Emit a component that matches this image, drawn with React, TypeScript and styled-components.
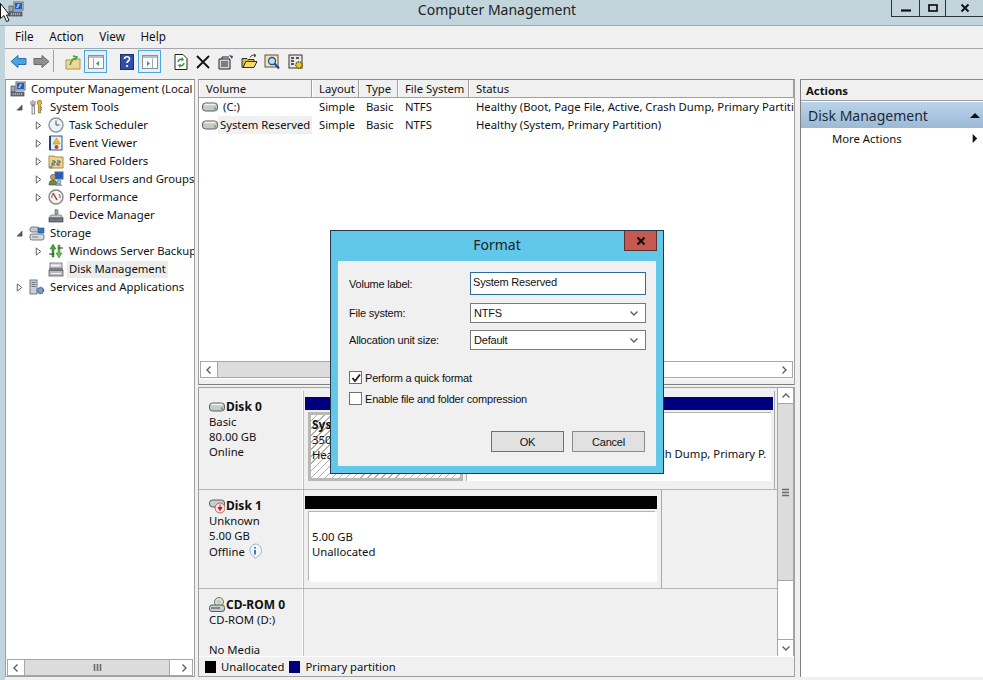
import React from "react";
import styled, { createGlobalStyle } from "styled-components";

const Global = createGlobalStyle`
html, body { margin: 0; padding: 0; background: #c3d5dc; overflow: hidden; }
* { box-sizing: border-box; }
`;

const UI = `"Noto Sans", "Liberation Sans", sans-serif`;
const DLG = `"Liberation Sans", Arial, sans-serif`;

const Win = styled.div`
  position: relative;
  width: 983px;
  height: 680px;
  background: #c3d5dc;
  font-family: ${UI};
  font-size: 11.3px;
  color: #111;
  overflow: hidden;
  display: flex;
  flex-direction: column;
`;
const TitleBar = styled.div`
  position: relative;
  height: 26px;
  flex: none;
  display: flex;
  align-items: center;
  justify-content: center;
  font-size: 14px;
  color: #222;
  padding-left: 11px;
  padding-bottom: 6px;
  border-bottom: 1px solid #9fa9ad;
`;
const AppIconSlot = styled.div`
  position: absolute;
  left: 8px;
  top: 1px;
`;
const Cursor = styled.svg`
  position: absolute;
  left: 0;
  top: 3px;
  width: 10px;
  height: 19px;
`;
const Controls = styled.div`
  position: absolute;
  right: 0;
  top: 0;
  display: flex;
  height: 17px;
  border-bottom: 1px solid #2c3438;
  border-left: 1px solid #2c3438;
`;
const Ctl = styled.div<{ $w: number }>`
  width: ${(p) => p.$w}px;
  display: flex;
  align-items: center;
  justify-content: center;
  & + & { border-left: 1px solid #2c3438; }
`;
const MenuBar = styled.div`
  height: 23px;
  flex: none;
  margin-left: 5px;
  padding: 0 0 2px 10px;
  background: #f0f0f0;
  border-bottom: 1px solid #a8a8a8;
  display: flex;
  align-items: center;
  gap: 15.500px;
  font-size: 11.700px;
`;
const ToolBar = styled.div`
  height: 30px;
  flex: none;
  margin-left: 5px;
  background: #f0f0f0;
  display: flex;
  align-items: flex-start;
  padding: 1px 0 0 5px;
`;
const Tool = styled.div<{ $w?: number; $ml?: number; $on?: boolean }>`
  width: ${(p) => p.$w ?? 16}px;
  height: 23px;
  margin-left: ${(p) => p.$ml ?? 0}px;
  flex: none;
  display: flex;
  align-items: center;
  justify-content: center;
  ${(p) => p.$on && `border: 1px solid #4fa6de; background: #e4f0f9;`}
`;
const ToolSep = styled.div`
  width: 1px;
  height: 22px;
  margin-left: 3px;
  background: #a0a0a0;
  flex: none;
`;
const Body = styled.div`
  flex: 1;
  display: flex;
  margin-left: 5px;
  background: #f0f0f0;
  padding-bottom: 3px;
  min-height: 0;
`;
const TreePane = styled.div`
  width: 190px;
  flex: none;
  display: flex;
  flex-direction: column;
  border: 1px solid #a0a0a0;
  border-top-color: #8a8a8a;
  background: #fff;
`;
const TreeList = styled.div`
  flex: 1;
  overflow: hidden;
`;
const TreeRow = styled.div<{ $pad: number }>`
  height: 18px;
  display: flex;
  align-items: center;
  padding-left: ${(p) => p.$pad}px;
  white-space: nowrap;
`;
const Twist = styled.div`
  width: 12px;
  flex: none;
  margin-right: 4px;
  display: flex;
  justify-content: center;
`;
const TreeLabel = styled.span<{ $sel?: boolean }>`
  margin-left: 3px;
  padding: 0 2px 1px;
  line-height: 16px;
  ${(p) => p.$sel && `background: #ececec;`}
`;
const HBar = styled.div`
  height: 17px;
  flex: none;
  display: flex;
  margin: 0 1px;
  border: 1px solid #a6a6a6;
  background: #fff;
`;
const SBtn = styled.div`
  width: 16px;
  height: 100%;
  flex: none;
  display: flex;
  align-items: center;
  justify-content: center;
  background: #fff;
`;
const HThumb = styled.div`
  flex: 1;
  background: #dcdcdc;
  border-left: 1px solid #a6a6a6;
  border-right: 1px solid #a6a6a6;
  display: flex;
  align-items: center;
  justify-content: center;
  margin-right: 6px;
`;
const Center = styled.div`
  flex: 1;
  margin-left: 3px;
  min-width: 0;
  display: flex;
  flex-direction: column;
`;
const ListPane = styled.div`
  height: 306px;
  flex: none;
  display: flex;
  flex-direction: column;
  border: 1px solid #a0a0a0;
  border-top-color: #8a8a8a;
  border-bottom: 1px solid #808080;
  background: #fff;
`;
const ColGrid = styled.div`
  display: grid;
  grid-template-columns: 113px 47px 39px 71px 1fr;
  white-space: nowrap;
  overflow: hidden;
`;
const Header = styled(ColGrid)`
  height: 18px;
  flex: none;
  background: #f0f0f0;
  border-bottom: 1px solid #a0a0a0;
`;
const HCell = styled.div`
  padding: 0 0 0 6px;
  line-height: 17px;
  border-right: 1px solid #a0a0a0;
  border-left: 1px solid #fff;
`;
const ListRow = styled(ColGrid)`
  height: 18px;
  align-items: center;
`;
const Cell = styled.div`
  padding-left: 7px;
  line-height: 18px;
`;
const VolCell = styled.div`
  display: flex;
  align-items: center;
  padding-left: 3px;
  height: 18px;
`;
const VolName = styled.span<{ $sel?: boolean; $ml: number }>`
  margin-left: ${(p) => p.$ml}px;
  flex: 1;
  padding-left: ${(p) => (p.$sel ? 2 : 0)}px;
  line-height: 18px;
  ${(p) => p.$sel && `background: #f0f0f0;`}
`;
const ListBody = styled.div`
  flex: 1;
  overflow: hidden;
`;
const HFill = styled.div`
  flex: 1;
  background: #fff;
`;
const LeftThumb = styled.div`
  width: 130px;
  background: #dcdcdc;
  border-left: 1px solid #a6a6a6;
`;
const ScrollStrip = styled.div`
  height: 6px;
  flex: none;
  background: #f0f0f0;
  border-top: 1px solid #fff;
`;
const LowerPane = styled.div`
  flex: 1;
  margin-top: 2px;
  min-height: 0;
  display: flex;
  flex-direction: column;
  border: 1px solid #a0a0a0;
`;
const DiskArea = styled.div`
  flex: 1;
  min-height: 0;
  display: flex;
`;
const Disks = styled.div`
  flex: 1;
  min-width: 0;
  display: flex;
  flex-direction: column;
  overflow: hidden;
  padding-top: 3px;
`;
const DiskRow = styled.div<{ $h?: number }>`
  height: ${(p) => (p.$h ? `${p.$h}px` : "auto")};
  flex: ${(p) => (p.$h ? "none" : 1)};
  display: flex;
  border-bottom: 1px solid #b4b4b4;
  &:last-child { border-bottom: none; }
`;
const DiskInfo = styled.div`
  width: 104px;
  flex: none;
  padding: 8px 0 0 10px;
  line-height: 15px;
  border-right: 1px solid #fff;
  box-shadow: 1px 0 0 #bdbdbd;
`;
const DiskName = styled.div`
  display: flex;
  align-items: center;
  font-weight: 700;
  font-size: 12px;
  height: 15px;
  gap: 1px;
`;
const Offline = styled.div`
  display: flex;
  align-items: center;
  gap: 2px;
`;
const DiskMap = styled.div<{ $w: number; $pr: number }>`
  width: ${(p) => p.$w}px;
  flex: none;
  margin-left: 1px;
  padding: 6px ${(p) => p.$pr}px 4px 1px;
  border-right: 1px solid #a8a8a8;
  display: flex;
  flex-direction: column;
`;
const PartBar = styled.div<{ $c: string }>`
  height: 13px;
  flex: none;
  background: ${(p) => p.$c};
`;
const Parts = styled.div`
  flex: 1;
  margin-top: 2px;
  display: flex;
  gap: 3px;
  padding-left: 3px;
  min-height: 0;
`;
const Part = styled.div<{ $w: string; $hatch?: boolean }>`
  width: ${(p) => p.$w};
  height: 69px;
  flex: none;
  overflow: hidden;
  white-space: nowrap;
  padding: 2px 0 0 1px;
  line-height: 15px;
  border: ${(p) => (p.$hatch ? "3px solid #b8b8b8" : "1px solid #b4b4b4")};
  ${(p) => !p.$hatch && `border-width: 1px 0 0 1px; padding-top: 33px; padding-left: 5px;`}
  background: ${(p) =>
    p.$hatch
      ? "repeating-linear-gradient(-45deg, #b0b0b0 0 1px, #fff 1px 5px)"
      : "#fff"};
`;
const Unalloc = styled(Part)`
  padding-top: 17px !important;
  padding-left: 3px !important;
  box-shadow: 2px 2px 0 #fff;
`;
const PartTitle = styled.div`
  font-weight: 700;
  font-size: 12px;
`;
const VBar = styled.div`
  width: 17px;
  flex: none;
  display: flex;
  flex-direction: column;
  border-left: 1px solid #a6a6a6;
  border-right: 1px solid #a6a6a6;
  background: #fff;
`;
const VBtn = styled.div`
  height: 15px;
  flex: none;
  display: flex;
  align-items: center;
  justify-content: center;
`;
const VThumb = styled.div`
  height: 178px;
  flex: none;
  background: #dcdcdc;
  border-top: 1px solid #a6a6a6;
  border-bottom: 1px solid #a6a6a6;
  display: flex;
  align-items: center;
  justify-content: center;
`;
const VFill = styled.div`
  flex: 1;
`;
const VBtnLow = styled(VBtn)`
  height: 17px;
  border-top: 1px solid #a6a6a6;
`;
const Legend = styled.div`
  height: 20px;
  flex: none;
  display: flex;
  align-items: center;
  padding-left: 6px;
  border-top: 1px solid #fff;
`;
const Swatch = styled.div<{ $c: string }>`
  width: 11px;
  height: 12px;
  background: ${(p) => p.$c};
  margin-right: 5px;
`;
const LegendText = styled.span`
  margin-right: 5px;
`;
const ActionsPane = styled.div`
  width: 183px;
  flex: none;
  margin-left: 5px;
  border-left: 1px solid #808080;
  border-top: 1px solid #8a8a8a;
  background: #fff;
`;
const ActionsHead = styled.div`
  height: 21px;
  background: #f0f0f0;
  font-weight: 700;
  padding-left: 5px;
  line-height: 21px;
  border-bottom: 1px solid #a0a0a0;
`;
const ActionsTitle = styled.div`
  height: 26px;
  display: flex;
  align-items: center;
  justify-content: space-between;
  font-size: 14px;
  padding: 0 3px 0 7px;
  margin-top: 1px;
  color: #1b2a3a;
  background: linear-gradient(#bad3ea, #9cb9d4);
`;
const ActionItem = styled.div`
  height: 20px;
  display: flex;
  align-items: center;
  justify-content: space-between;
  padding: 0 4px 0 31px;
`;
const Dialog = styled.div`
  position: absolute;
  left: 330px;
  top: 230px;
  width: 334px;
  height: 244px;
  background: #62c8ea;
  border: 1px solid #23384a;
  padding: 30px 7px 7px;
  font-family: ${DLG};
  font-size: 11px;
  letter-spacing: -0.2px;
  color: #111;
`;
const DialogTitle = styled.div`
  position: absolute;
  left: 0;
  right: 0;
  top: 5px;
  text-align: center;
  font-family: ${UI};
  letter-spacing: 0;
  font-size: 14px;
  line-height: 18px;
  color: #222;
`;
const DialogClose = styled.div`
  position: absolute;
  right: 6px;
  top: 0;
  width: 33px;
  height: 20px;
  background: #c75a50;
  border: 1px solid #5a3330;
  border-top: none;
  display: flex;
  align-items: center;
  justify-content: center;
`;
const DialogBody = styled.div`
  height: 100%;
  background: #f0f0f0;
  padding: 11px 11px 0;
  display: flex;
  flex-direction: column;
`;
const FieldRow = styled.div<{ $mt: number; $h: number }>`
  display: grid;
  grid-template-columns: 121px 176px;
  align-items: center;
  height: ${(p) => p.$h}px;
  margin-top: ${(p) => p.$mt}px;
`;
const TextBox = styled.div`
  height: 100%;
  background: #fff;
  border: 1px solid #2f6b95;
  padding: 2px 2px;
  line-height: 14px;
`;
const Select = styled.div`
  height: 100%;
  background: #fff;
  border: 1px solid #7a7a7a;
  display: flex;
  align-items: center;
  justify-content: space-between;
  padding: 0 6px 0 3px;
`;
const CheckRow = styled.div<{ $mt: number }>`
  display: flex;
  align-items: center;
  margin-top: ${(p) => p.$mt}px;
  height: 13px;
`;
const CheckBox = styled.div`
  width: 13px;
  height: 13px;
  background: #fff;
  border: 1px solid #707070;
  margin-right: 3px;
  display: flex;
  align-items: center;
  justify-content: center;
`;
const Buttons = styled.div`
  display: flex;
  justify-content: flex-end;
  gap: 8px;
  margin-top: 26px;
`;
const Btn = styled.div<{ $def?: boolean }>`
  width: 73px;
  height: 21px;
  background: #e1e1e1;
  border: 1px solid ${(p) => (p.$def ? "#3c7fb1" : "#8a8a8a")};
  display: flex;
  align-items: center;
  justify-content: center;
`;

const Ic = styled.svg<{ $s?: number }>`
  width: ${(p) => p.$s ?? 16}px;
  height: ${(p) => p.$s ?? 16}px;
  flex: none;
  display: block;
`;

const Computer = () => (
  <Ic viewBox="0 0 16 16">
    <rect x="6" y="1" width="9" height="8" fill="#d5dde6" stroke="#5a6a80" />
    <rect x="7" y="2" width="7" height="6" fill="#1f5fc4" />
    <path d="M8 7l2-4h2l-2 4z" fill="#fff" opacity=".6" />
    <rect x="1" y="5" width="4" height="6" fill="#9aa7b5" stroke="#4a5563" strokeWidth=".7" />
    <rect x="1" y="11" width="13" height="4" fill="#6d7680" stroke="#3d444c" strokeWidth=".7" />
    <path d="M3 13h9" stroke="#d8dde2" strokeDasharray="1 1" />
  </Ic>
);
const Tools = () => (
  <Ic viewBox="0 0 16 16">
    <path d="M4 1v5M2 2v3l2 2 2-2V2" fill="none" stroke="#8a8f96" strokeWidth="1.300" />
    <rect x="3" y="7" width="2.400" height="8" fill="#e8e8e8" stroke="#60666e" strokeWidth=".7" />
    <path d="M11 1l1.500 1v3l-1 1v2h1v1h-1v1h1v1h-1v3h-2V6l-1-1V2z" fill="#eab531" stroke="#7a5a10" strokeWidth=".6" />
  </Ic>
);
const Clock = () => (
  <Ic viewBox="0 0 16 16">
    <circle cx="8" cy="8" r="7" fill="#eef1f3" stroke="#8c969e" strokeWidth="1.400" />
    <path d="M8 3.500V8h3.500" fill="none" stroke="#4a5560" strokeWidth="1" />
  </Ic>
);
const EventLog = () => (
  <Ic viewBox="0 0 16 16">
    <rect x="2" y="1" width="12" height="14" fill="#e8eef6" stroke="#33558a" />
    <path d="M2 1v14" stroke="#27417a" strokeWidth="2" />
    <path d="M8.500 3L12 9H5z" fill="#f2c21e" stroke="#9a7610" strokeWidth=".5" />
    <circle cx="8.500" cy="12" r="2" fill="#c93a3a" />
  </Ic>
);
const SharedFolder = () => (
  <Ic viewBox="0 0 16 16">
    <path d="M1 3h5l1 1h8v11H1z" fill="#eed58e" stroke="#a68a42" />
    <path d="M4 8h3v2H4v2h3M9 8h3v2H9v2h3" fill="none" stroke="#3c5a7a" />
    <circle cx="3" cy="14" r="1.600" fill="#5aa868" />
  </Ic>
);
const Users = () => (
  <Ic viewBox="0 0 16 16">
    <rect x="7" y="1" width="8" height="7" fill="#1f5fc4" stroke="#5a6a80" />
    <circle cx="5" cy="6" r="2.600" fill="#c89a6a" stroke="#5d4a30" strokeWidth=".6" />
    <path d="M1 14c0-4 2-5 4-5s4 1 4 5z" fill="#6d8a3c" stroke="#44552a" strokeWidth=".6" />
    <circle cx="11" cy="11" r="2" fill="#b0c4d8" stroke="#5a6a80" strokeWidth=".6" />
    <path d="M8 15c0-2 1-2.500 3-2.500s3 .5 3 2.500z" fill="#8aa6c2" />
  </Ic>
);
const Gauge = () => (
  <Ic viewBox="0 0 16 16">
    <circle cx="8" cy="8" r="7" fill="#f4f4f2" stroke="#868686" strokeWidth="1.400" />
    <path d="M5 4l4 7" stroke="#c5322a" strokeWidth="1.500" />
    <path d="M4 9a4 4 0 0 1 1-4M11 5a4 4 0 0 1 1 4" fill="none" stroke="#333" strokeWidth=".8" />
  </Ic>
);
const DeviceMgr = () => (
  <Ic viewBox="0 0 16 16">
    <path d="M8 2v6" stroke="#666" strokeWidth="1" />
    <rect x="7" y="3" width="3" height="4" fill="#8cb88c" stroke="#4e6e4e" strokeWidth=".6" />
    <path d="M3 8h10l2 3H1z" fill="#c9ced3" stroke="#5f666d" strokeWidth=".7" />
    <rect x="1" y="11" width="14" height="4" fill="#73797f" stroke="#40454a" strokeWidth=".7" />
  </Ic>
);
const Storage = () => (
  <Ic viewBox="0 0 16 16">
    <rect x="1" y="2" width="9" height="5" rx="2" fill="#c4ccd2" stroke="#59626a" strokeWidth=".8" />
    <rect x="1" y="9" width="14" height="6" rx="2" fill="#d2d8dc" stroke="#59626a" strokeWidth=".8" />
    <rect x="9" y="3" width="6" height="5" fill="#2f78c4" stroke="#2b4e78" strokeWidth=".6" />
    <path d="M3 12h6" stroke="#7a848c" />
  </Ic>
);
const Backup = () => (
  <Ic viewBox="0 0 16 16">
    <path d="M5 1l3 5H6v8H4V6H2z" fill="#4aa63a" stroke="#2a6a20" strokeWidth=".5" />
    <path d="M11 15l-3-5h2V2h2v8h2z" fill="#6cc24a" stroke="#2a6a20" strokeWidth=".5" />
    <path d="M1 11h5M10 5h5" stroke="#333" />
  </Ic>
);
const DiskMgmt = () => (
  <Ic viewBox="0 0 16 16">
    <rect x="2" y="2" width="12" height="5" fill="#d8dbde" stroke="#6a6a6a" strokeWidth=".8" />
    <rect x="1" y="7" width="14" height="2.500" fill="#7c8186" />
    <rect x="1" y="9.500" width="14" height="5.500" fill="#b6bbc0" stroke="#5a5a5a" strokeWidth=".8" />
    <path d="M3 4.500h8M3 12.500h10" stroke="#f4f4f4" />
  </Ic>
);
const Services = () => (
  <Ic viewBox="0 0 16 16">
    <rect x="1" y="1" width="7" height="14" fill="#c8ced4" stroke="#5c646c" strokeWidth=".8" />
    <path d="M2.500 3.500h4M2.500 5.500h4M2.500 7.500h4" stroke="#6a727a" />
    <circle cx="11.500" cy="11.500" r="3" fill="#7aa3cc" stroke="#46688c" strokeDasharray="1.500 .6" strokeWidth="1.500" />
  </Ic>
);
const Drive = () => (
  <Ic viewBox="0 0 16 12" $s={16}>
    <rect x=".5" y="2" width="15" height="8" rx="3" fill="#c4c9c9" stroke="#5a5f5f" />
    <path d="M2.500 3.500h11" stroke="#f2f2f2" strokeWidth="1.500" />
    <rect x="12" y="6.500" width="2" height="2" fill="#5fae4c" />
  </Ic>
);
const DriveDown = () => (
  <Ic viewBox="0 0 16 16">
    <rect x=".5" y="2" width="15" height="7" rx="3" fill="#c9cdcd" stroke="#5a5f5f" />
    <circle cx="11" cy="10" r="5" fill="#f6e4e4" stroke="#a03030" strokeWidth=".7" />
    <path d="M11 6.500v4M9 9.500l2 3 2-3z" stroke="#c02020" fill="#c02020" />
  </Ic>
);
const CdDrive = () => (
  <Ic viewBox="0 0 16 16">
    <circle cx="10" cy="5" r="4.500" fill="#d9e2cf" stroke="#6b7a6b" />
    <circle cx="10" cy="5" r="1.200" fill="#fff" stroke="#6b7a6b" strokeWidth=".5" />
    <rect x=".5" y="8" width="15" height="6.500" rx="2.500" fill="#c9cdcd" stroke="#5a5f5f" />
    <path d="M2 11h9" stroke="#444" />
  </Ic>
);
const Info = () => (
  <Ic viewBox="0 0 16 16">
    <path d="M8 1a6.500 6.500 0 0 1 2.500 12.500L8 15.500l-1-2.200A6.500 6.500 0 0 1 8 1z" fill="#f2f6fb" stroke="#9db6d2" />
    <path d="M8 4v1.600M8 7v4.500" stroke="#2f6bb0" strokeWidth="1.800" />
  </Ic>
);
const TwistOpen = () => (
  <Ic viewBox="0 0 8 8" $s={7}>
    <path d="M7 1v6H1z" fill="#595959" stroke="#404040" strokeWidth=".5" />
  </Ic>
);
const TwistClosed = () => (
  <Ic viewBox="0 0 8 10" $s={9}>
    <path d="M1.500 1l5 4-5 4z" fill="#fff" stroke="#555" />
  </Ic>
);
const Chev = ({ d }: { d: string }) => (
  <Ic viewBox="0 0 10 10" $s={10}>
    <path d={d} fill="none" stroke="#606060" strokeWidth="1.400" />
  </Ic>
);
const Grip = ({ vertical }: { vertical?: boolean }) => (
  <Ic viewBox="0 0 9 9" $s={9}>
    {vertical ? (
      <path d="M1 1.500h7M1 4.500h7M1 7.500h7" stroke="#6a6a6a" strokeWidth="1.600" />
    ) : (
      <path d="M1.500 1v7M4.500 1v7M7.500 1v7" stroke="#6a6a6a" strokeWidth="1.600" />
    )}
  </Ic>
);

const ArrowBtn = ({ fill, stroke, flip }: { fill: string; stroke: string; flip?: boolean }) => (
  <Ic viewBox="0 0 17 14" $s={17}>
    <path
      d={flip ? "M16 7L9 1v3H1v6h8v3z" : "M1 7l7-6v3h8v6H8v3z"}
      fill={fill}
      stroke={stroke}
    />
  </Ic>
);
const UpFolder = () => (
  <Ic viewBox="0 0 16 16">
    <path d="M1 6h5l1-1h8v10H1z" fill="#f0d79a" stroke="#b09250" />
    <path d="M5 11c1-4 3-6 6-7M8 2l4 1-2 3" fill="none" stroke="#42a83c" strokeWidth="1.600" />
  </Ic>
);
const PaneIcon = ({ right }: { right?: boolean }) => (
  <Ic viewBox="0 0 16 14" $s={16}>
    <rect x=".5" y=".5" width="15" height="13" fill="#f8fafb" stroke="#8e8e8e" />
    <rect x="1" y="1" width="14" height="2" fill="#b8bec2" />
    <path d={right ? "M10.500 3.500v10" : "M5.500 3.500v10"} stroke="#a8a8a8" />
    <path d={right ? "M5 6v5l3-2.500z" : "M11 6v5l-3-2.500z"} fill="#3da04c" />
  </Ic>
);
const Help = () => (
  <Ic viewBox="0 0 14 16">
    <rect x=".5" y=".5" width="13" height="15" fill="#2f4fa8" stroke="#1c2f70" />
    <path d="M4.500 5c0-3 5-3 5 0 0 2-2.500 2-2.500 4M7 11v2" fill="none" stroke="#fff" strokeWidth="1.700" />
  </Ic>
);
const Refresh = () => (
  <Ic viewBox="0 0 14 16">
    <path d="M1 .5h8l4 4v11H1z" fill="#fff" stroke="#222" />
    <path d="M4 8a3 3 0 0 1 5-2M10 9a3 3 0 0 1-5 2" fill="none" stroke="#2f9a33" strokeWidth="1.500" />
    <path d="M8 3l2 3-3 1zM6 14l-2-3 3-1z" fill="#2f9a33" />
  </Ic>
);
const Del = () => (
  <Ic viewBox="0 0 14 14" $s={14}>
    <path d="M1 1l12 12M13 1L1 13" stroke="#111" strokeWidth="1.800" />
  </Ic>
);
const Props = () => (
  <Ic viewBox="0 0 16 16">
    <path d="M1 5h11v10H1z" fill="#d8d8d8" stroke="#222" />
    <path d="M3 8h7M3 10h7M3 12h7" stroke="#222" />
    <path d="M4 5V3h7" fill="none" stroke="#222" />
    <path d="M11 1l4 1-1 3z" fill="#2b3f8a" />
  </Ic>
);
const OpenFolder = () => (
  <Ic viewBox="0 0 17 16" $s={17}>
    <path d="M1 5h5l1 1h6v2H5l-3 6H1z" fill="#d2b84a" stroke="#333" />
    <path d="M2 14l3-6h11l-3 6z" fill="#f3da6a" stroke="#333" />
    <path d="M9 4c1-2 3-3 5-2M13 .5l2 1.500-2 1.500" fill="none" stroke="#333" />
  </Ic>
);
const Search = () => (
  <Ic viewBox="0 0 16 16">
    <rect x="1" y="1" width="13" height="12" fill="#f1e7a8" stroke="#555" />
    <circle cx="8" cy="7" r="3.500" fill="#bfe0f2" stroke="#2a4a9a" strokeWidth="1.300" />
    <path d="M10.500 9.500l4.500 5" stroke="#2a3f9a" strokeWidth="2" />
  </Ic>
);
const Settings = () => (
  <Ic viewBox="0 0 16 16">
    <rect x="1" y="1" width="13" height="13" fill="#e8e8e8" stroke="#333" />
    <path d="M3 4h3M8 4h3M3 7h3M3 10h3" stroke="#222" strokeWidth="1.300" />
    <circle cx="11" cy="11" r="3.200" fill="#e9c62a" stroke="#6a5a10" strokeDasharray="1.500 .7" strokeWidth="1.400" />
  </Ic>
);

export default function App() {
  return (
    <Win>
      <Global />
      <TitleBar>
        <AppIconSlot>
          <Computer />
        </AppIconSlot>
        Computer Management
        <Controls>
          <Ctl $w={27}>
            <Ic viewBox="0 0 10 10" $s={10}><path d="M0 7.500h10" stroke="#111" strokeWidth="2.200" /></Ic>
          </Ctl>
          <Ctl $w={26}>
            <Ic viewBox="0 0 10 10" $s={10}><rect x="1" y="2" width="8" height="6" fill="none" stroke="#111" strokeWidth="1.700" /></Ic>
          </Ctl>
          <Ctl $w={38}>
            <Ic viewBox="0 0 10 10" $s={10}><path d="M1.500 1.500l7 7M8.500 1.500l-7 7" stroke="#111" strokeWidth="1.900" /></Ic>
          </Ctl>
        </Controls>
      </TitleBar>
      <MenuBar>
        <span>File</span>
        <span>Action</span>
        <span>View</span>
        <span>Help</span>
      </MenuBar>
      <ToolBar>
        <Tool $w={17}><ArrowBtn fill="#4aa3e0" stroke="#2a73b0" /></Tool>
        <Tool $w={17} $ml={6}><ArrowBtn fill="#909090" stroke="#6a6a6a" flip /></Tool>
        <ToolSep />
        <Tool $ml={11}><UpFolder /></Tool>
        <Tool $w={23} $ml={3} $on><PaneIcon /></Tool>
        <Tool $ml={12}><Help /></Tool>
        <Tool $w={23} $ml={3} $on><PaneIcon right /></Tool>
        <Tool $ml={12}><Refresh /></Tool>
        <Tool $ml={6}><Del /></Tool>
        <Tool $ml={7}><Props /></Tool>
        <Tool $w={17} $ml={7}><OpenFolder /></Tool>
        <Tool $ml={6}><Search /></Tool>
        <Tool $ml={8}><Settings /></Tool>
      </ToolBar>
      <Body>
        <TreePane>
          <TreeList>
            <TreeRow $pad={4}><Computer /><TreeLabel>Computer Management (Local</TreeLabel></TreeRow>
            <TreeRow $pad={7}><Twist><TwistOpen /></Twist><Tools /><TreeLabel>System Tools</TreeLabel></TreeRow>
            <TreeRow $pad={26}><Twist><TwistClosed /></Twist><Clock /><TreeLabel>Task Scheduler</TreeLabel></TreeRow>
            <TreeRow $pad={26}><Twist><TwistClosed /></Twist><EventLog /><TreeLabel>Event Viewer</TreeLabel></TreeRow>
            <TreeRow $pad={26}><Twist><TwistClosed /></Twist><SharedFolder /><TreeLabel>Shared Folders</TreeLabel></TreeRow>
            <TreeRow $pad={26}><Twist><TwistClosed /></Twist><Users /><TreeLabel>Local Users and Groups</TreeLabel></TreeRow>
            <TreeRow $pad={26}><Twist><TwistClosed /></Twist><Gauge /><TreeLabel>Performance</TreeLabel></TreeRow>
            <TreeRow $pad={42}><DeviceMgr /><TreeLabel>Device Manager</TreeLabel></TreeRow>
            <TreeRow $pad={7}><Twist><TwistOpen /></Twist><Storage /><TreeLabel>Storage</TreeLabel></TreeRow>
            <TreeRow $pad={26}><Twist><TwistClosed /></Twist><Backup /><TreeLabel>Windows Server Backup</TreeLabel></TreeRow>
            <TreeRow $pad={42}><DiskMgmt /><TreeLabel $sel>Disk Management</TreeLabel></TreeRow>
            <TreeRow $pad={7}><Twist><TwistClosed /></Twist><Services /><TreeLabel>Services and Applications</TreeLabel></TreeRow>
          </TreeList>
          <HBar>
            <SBtn><Chev d="M6.500 1.500L3 5l3.500 3.500" /></SBtn>
            <HThumb><Grip /></HThumb>
            <SBtn><Chev d="M3.500 1.500L7 5 3.500 8.500" /></SBtn>
          </HBar>
        </TreePane>
        <Center>
          <ListPane>
            <Header>
              <HCell>Volume</HCell>
              <HCell>Layout</HCell>
              <HCell>Type</HCell>
              <HCell>File System</HCell>
              <HCell>Status</HCell>
            </Header>
            <ListBody>
              <ListRow>
                <VolCell><Drive /><VolName $ml={5}>(C:)</VolName></VolCell>
                <Cell>Simple</Cell>
                <Cell>Basic</Cell>
                <Cell>NTFS</Cell>
                <Cell>Healthy (Boot, Page File, Active, Crash Dump, Primary Partition)</Cell>
              </ListRow>
              <ListRow>
                <VolCell><Drive /><VolName $sel $ml={0}>System Reserved</VolName></VolCell>
                <Cell>Simple</Cell>
                <Cell>Basic</Cell>
                <Cell>NTFS</Cell>
                <Cell>Healthy (System, Primary Partition)</Cell>
              </ListRow>
            </ListBody>
            <HBar>
              <SBtn><Chev d="M6.500 1.500L3 5l3.500 3.500" /></SBtn>
              <LeftThumb />
              <HFill />
              <SBtn><Chev d="M3.500 1.500L7 5 3.500 8.500" /></SBtn>
            </HBar>
            <ScrollStrip />
          </ListPane>
          <LowerPane>
            <DiskArea>
              <Disks>
                <DiskRow $h={99}>
                  <DiskInfo>
                    <DiskName><Drive />Disk 0</DiskName>
                    <div>Basic</div>
                    <div>80.00 GB</div>
                    <div>Online</div>
                  </DiskInfo>
                  <DiskMap $w={471} $pr={1}>
                    <PartBar $c="#00007f" />
                    <Parts>
                      <Part $w="155px" $hatch>
                        <PartTitle>System Reserved</PartTitle>
                        <div>350 MB NTFS</div>
                        <div>Healthy (System, Primary Partition)</div>
                      </Part>
                      <Part $w="305px">
                        <div>Healthy (Boot, Page File, Active, Crash Dump, Primary P.</div>
                      </Part>
                    </Parts>
                  </DiskMap>
                </DiskRow>
                <DiskRow $h={99}>
                  <DiskInfo>
                    <DiskName><DriveDown />Disk 1</DiskName>
                    <div>Unknown</div>
                    <div>5.00 GB</div>
                    <Offline>Offline <Info /></Offline>
                  </DiskInfo>
                  <DiskMap $w={358} $pr={4}>
                    <PartBar $c="#000" />
                    <Parts>
                      <Unalloc $w="347px">
                        <div>5.00 GB</div>
                        <div>Unallocated</div>
                      </Unalloc>
                    </Parts>
                  </DiskMap>
                </DiskRow>
                <DiskRow>
                  <DiskInfo>
                    <DiskName><CdDrive />CD-ROM 0</DiskName>
                    <div>CD-ROM (D:)</div>
                    <div>&nbsp;</div>
                    <div>No Media</div>
                  </DiskInfo>
                </DiskRow>
              </Disks>
              <VBar>
                <VBtn><Chev d="M1.500 6.500L5 3l3.500 3.500" /></VBtn>
                <VThumb><Grip vertical /></VThumb>
                <VFill />
                <VBtnLow><Chev d="M1.500 3.500L5 7l3.500-3.500" /></VBtnLow>
              </VBar>
            </DiskArea>
            <Legend>
              <Swatch $c="#000" />
              <LegendText>Unallocated</LegendText>
              <Swatch $c="#00007f" />
              <LegendText>Primary partition</LegendText>
            </Legend>
          </LowerPane>
        </Center>
        <ActionsPane>
          <ActionsHead>Actions</ActionsHead>
          <ActionsTitle>
            Disk Management
            <Ic viewBox="0 0 10 6" $s={10}><path d="M0 6l5-5 5 5z" fill="#111" /></Ic>
          </ActionsTitle>
          <ActionItem>
            More Actions
            <Ic viewBox="0 0 6 10" $s={9}><path d="M1 0l5 5-5 5z" fill="#111" /></Ic>
          </ActionItem>
        </ActionsPane>
      </Body>
      <Dialog>
        <DialogTitle>Format</DialogTitle>
        <DialogClose>
          <Ic viewBox="0 0 10 10" $s={10}><path d="M1.500 1.500l7 7M8.500 1.500l-7 7" stroke="#111" strokeWidth="2.200" /></Ic>
        </DialogClose>
        <DialogBody>
          <FieldRow $mt={0} $h={23}>
            <span>Volume label:</span>
            <TextBox>System Reserved</TextBox>
          </FieldRow>
          <FieldRow $mt={8} $h={20}>
            <span>File system:</span>
            <Select>NTFS<Chev d="M1.500 3.500L5 7l3.500-3.500" /></Select>
          </FieldRow>
          <FieldRow $mt={7} $h={20}>
            <span>Allocation unit size:</span>
            <Select>Default<Chev d="M1.500 3.500L5 7l3.500-3.500" /></Select>
          </FieldRow>
          <CheckRow $mt={21}>
            <CheckBox>
              <Ic viewBox="0 0 10 10" $s={10}><path d="M1.500 5l2.500 3 5-6.500" fill="none" stroke="#222" strokeWidth="1.900" /></Ic>
            </CheckBox>
            Perform a quick format
          </CheckRow>
          <CheckRow $mt={8}>
            <CheckBox />
            Enable file and folder compression
          </CheckRow>
          <Buttons>
            <Btn $def>OK</Btn>
            <Btn>Cancel</Btn>
          </Buttons>
        </DialogBody>
      </Dialog>
      <Cursor viewBox="0 0 10 19">
        <path d="M.5.500v15l3.500-3 2.500 6 2.500-1-2.500-5.500H9.500z" fill="#fff" stroke="#111" />
      </Cursor>
    </Win>
  );
}
